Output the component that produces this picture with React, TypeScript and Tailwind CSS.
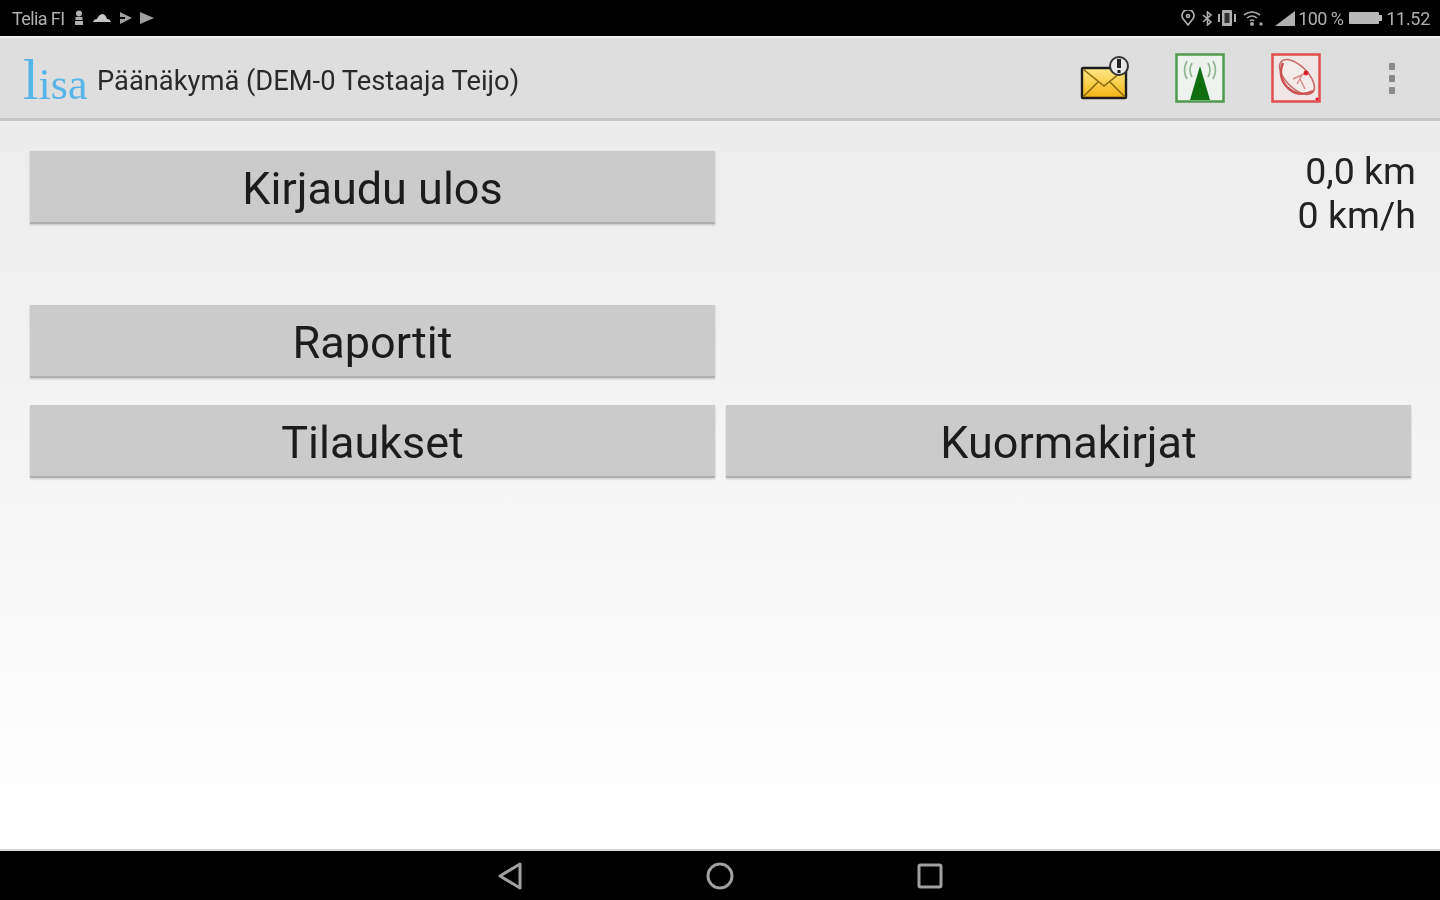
import React from "react";

const Btn = ({ label, extra = "" }: { label: string; extra?: string }) => (
  <div className={`h-[73px] w-[685px] flex items-center justify-center bg-[#cbcbcb] border-b-2 border-[#b0b0b0] shadow-[0_1px_2px_rgba(0,0,0,0.2)] text-[45px] text-[#1c1c1c] ${extra}`}>
    <span className="mt-[5px] blur-[0.6px]">{label}</span>
  </div>
);

const Mail = () => (
  <svg width="52" height="46" viewBox="0 0 52 46" className="blur-[0.5px]">
    <defs>
      <linearGradient id="mg" x1="0" y1="0" x2="0" y2="1">
        <stop offset="0" stopColor="#ffe98a" />
        <stop offset="1" stopColor="#f5b412" />
      </linearGradient>
    </defs>
    <rect x="2" y="13" width="44" height="30" rx="1" fill="url(#mg)" stroke="#1c1c1c" strokeWidth="2.4" />
    <path d="M3 14 L24 31 L45 14 M3 42 L18 27 M45 42 L30 27" fill="none" stroke="#8a6a10" strokeWidth="1.6" />
    <circle cx="39" cy="11" r="9" fill="#e8e8e8" stroke="#333" strokeWidth="2" />
    <rect x="37" y="4" width="4" height="9" fill="#222" />
    <rect x="37.5" y="15" width="3" height="3" fill="#222" />
  </svg>
);

const Tower = () => (
  <svg width="50" height="50" viewBox="0 0 50 50" className="blur-[0.5px]">
    <rect x="1.5" y="1.5" width="47" height="47" fill="#eef2ee" stroke="#4f9a4f" strokeWidth="2.5" />
    <path d="M25 13 L35 47 L15 47 Z" fill="#0f6e0f" />
    <path d="M12 8 Q7 17 12 26 M17 10 Q13 17 17 24 M38 8 Q43 17 38 26 M33 10 Q37 17 33 24" fill="none" stroke="#8db58d" strokeWidth="1.6" />
  </svg>
);

const Dish = () => (
  <svg width="50" height="50" viewBox="0 0 50 50" className="blur-[0.5px]">
    <rect x="1.5" y="1.5" width="47" height="47" fill="#f0e6e6" stroke="#e04e4e" strokeWidth="2.5" />
    <ellipse cx="26" cy="24" rx="11" ry="22" transform="rotate(-45 26 24)" fill="#f3eaea" stroke="#c96a6a" strokeWidth="1.6" />
    <path d="M12 10 Q6 24 17 35 Q28 45 42 38" fill="none" stroke="#c9504f" strokeWidth="2.4" />
    <path d="M22 26 L35 20 M26 31 L31 22 M34 36 L29 26" fill="none" stroke="#d98a8a" strokeWidth="1.4" />
    <circle cx="35" cy="20" r="2.4" fill="#d8202a" />
    <circle cx="46" cy="46" r="1.6" fill="#e01a2a" />
  </svg>
);

export default function App() {
  return (
    <div className="w-[1440px] h-[900px] flex flex-col overflow-hidden bg-white font-['Roboto',sans-serif]">
      <div className="h-[36px] shrink-0 bg-black flex items-center justify-between pl-[12px] pr-[10px] text-[18px] tracking-[-0.6px] text-[#b0b0b0] blur-[0.6px]">
        <div className="flex items-center gap-[6px]">
          <span>Telia FI</span>
          <svg width="12" height="16" viewBox="0 0 12 16" fill="#b0b0b0" className="ml-[3px]"><circle cx="6" cy="3.5" r="3" /><rect x="2.5" y="7" width="7" height="3" /><rect x="2" y="11" width="8" height="4" /></svg>
          <svg width="18" height="10" viewBox="0 0 18 10" fill="#c4c4c4" className="ml-[2px]"><path d="M0 9 Q1 6 4 6 Q6 1 10 1 Q13 2 14 6 Q17 6 18 9 Z" /></svg>
          <svg width="15" height="14" viewBox="0 0 15 14" fill="#a0a0a0" className="ml-[1px]"><path d="M2 1 L14 7 L2 13 Z" /><rect x="0" y="6" width="7" height="2" fill="#000" /></svg>
          <svg width="15" height="14" viewBox="0 0 15 14" fill="#a0a0a0"><path d="M1 1 L15 7 L1 13 Z" /></svg>
        </div>
        <div className="flex items-center">
          <svg width="16" height="16" viewBox="0 0 16 16" fill="none" stroke="#b0b0b0" strokeWidth="1.6"><path d="M8 15 L2.5 8 A6 6 0 1 1 13.5 8 Z" /><circle cx="8" cy="6" r="1.5" /></svg>
          <svg width="11" height="15" viewBox="0 0 11 15" fill="none" stroke="#b0b0b0" strokeWidth="1.6" className="ml-[6px]"><path d="M1 4 L9 11 L5.5 14 L5.5 1 L9 4 L1 11" /></svg>
          <svg width="18" height="16" viewBox="0 0 18 16" fill="#b0b0b0" className="ml-[5px]"><rect x="4" y="0" width="10" height="16" rx="1" /><rect x="6.5" y="3" width="5" height="10" fill="#333" /><rect x="0" y="4" width="2" height="8" /><rect x="16" y="4" width="2" height="8" /></svg>
          <svg width="20" height="15" viewBox="0 0 20 15" fill="none" stroke="#a8a8a8" strokeWidth="1.6" className="ml-[7px]"><path d="M1 4 Q9 -2 17 4 M4 7 Q9 3 14 7 M7 10 Q9 8 11 10" /><circle cx="9" cy="13" r="1.2" fill="#a8a8a8" /><circle cx="18" cy="13" r="0.9" fill="#a8a8a8" /></svg>
          <svg width="20" height="15" viewBox="0 0 20 15" fill="#b0b0b0" className="ml-[12px]"><path d="M0 15 L20 0 L20 15 Z" /></svg>
          <span className="ml-[3px] w-[51px]">100 %</span>
          <svg width="33" height="12" viewBox="0 0 33 12" fill="#b8b8b8"><rect x="0" y="0" width="30" height="12" rx="1" /><rect x="30" y="3" width="3" height="6" /></svg>
          <span className="ml-[4px] tracking-[-0.3px]">11.52</span>
        </div>
      </div>

      <div className="relative z-10 h-[85px] shrink-0 flex items-center bg-[#dedede] border-t-2 border-[#f0f0f0] border-b-[3px] border-b-[#c6c6c6] pl-[23px] pr-[45px]">
        <div className="w-[74px] flex items-baseline font-['Liberation_Serif',serif] text-[#56b4e9] leading-none mt-[3px] blur-[0.4px]">
          <span className="text-[56px] font-light">l</span>
          <span className="text-[44px]">isa</span>
        </div>
        <span className="text-[27.3px] text-[#2a2a2a] mt-[6px] blur-[0.6px]">Päänäkymä (DEM-0 Testaaja Teijo)</span>
        <div className="ml-auto flex items-center">
          <Mail />
          <div className="ml-[43px]"><Tower /></div>
          <div className="ml-[46px]"><Dish /></div>
          <div className="ml-[68px] flex flex-col gap-[5px] blur-[0.5px]">
            <span className="w-[6px] h-[7px] bg-[#8a8a8a] rounded-[1px]" />
            <span className="w-[6px] h-[7px] bg-[#8a8a8a] rounded-[1px]" />
            <span className="w-[6px] h-[7px] bg-[#8a8a8a] rounded-[1px]" />
          </div>
        </div>
      </div>

      <div className="flex-1 min-h-0 bg-gradient-to-b from-[#ececec] to-[#ffffff] pl-[30px] pr-[24px] pt-[30px] border-b-2 border-[#d8d8d8]">
        <div className="flex justify-between items-start">
          <Btn label="Kirjaudu ulos" />
          <div className="text-right text-[37.5px] leading-[44px] text-[#222222] -mt-[2px] blur-[0.6px]">
            <div>0,0 km</div>
            <div>0 km/h</div>
          </div>
        </div>
        <div className="mt-[68px]"><Btn label="Raportit" /></div>
        <div className="mt-[27px] flex gap-[11px]">
          <Btn label="Tilaukset" />
          <Btn label="Kuormakirjat" />
        </div>
      </div>

      <div className="h-[49px] shrink-0 bg-black flex items-center justify-center gap-[182px] blur-[0.5px]">
        <svg width="26" height="30" viewBox="0 0 26 30" fill="none" stroke="#a0a0a0" strokeWidth="3" strokeLinejoin="round"><path d="M23 3 L3 15 L23 27 Z" /></svg>
        <svg width="30" height="30" viewBox="0 0 30 30" fill="none" stroke="#a0a0a0" strokeWidth="3"><circle cx="15" cy="15" r="12" /></svg>
        <svg width="26" height="26" viewBox="0 0 26 26" fill="none" stroke="#a0a0a0" strokeWidth="3"><rect x="2" y="2" width="22" height="22" rx="1.5" /></svg>
      </div>
    </div>
  );
}
